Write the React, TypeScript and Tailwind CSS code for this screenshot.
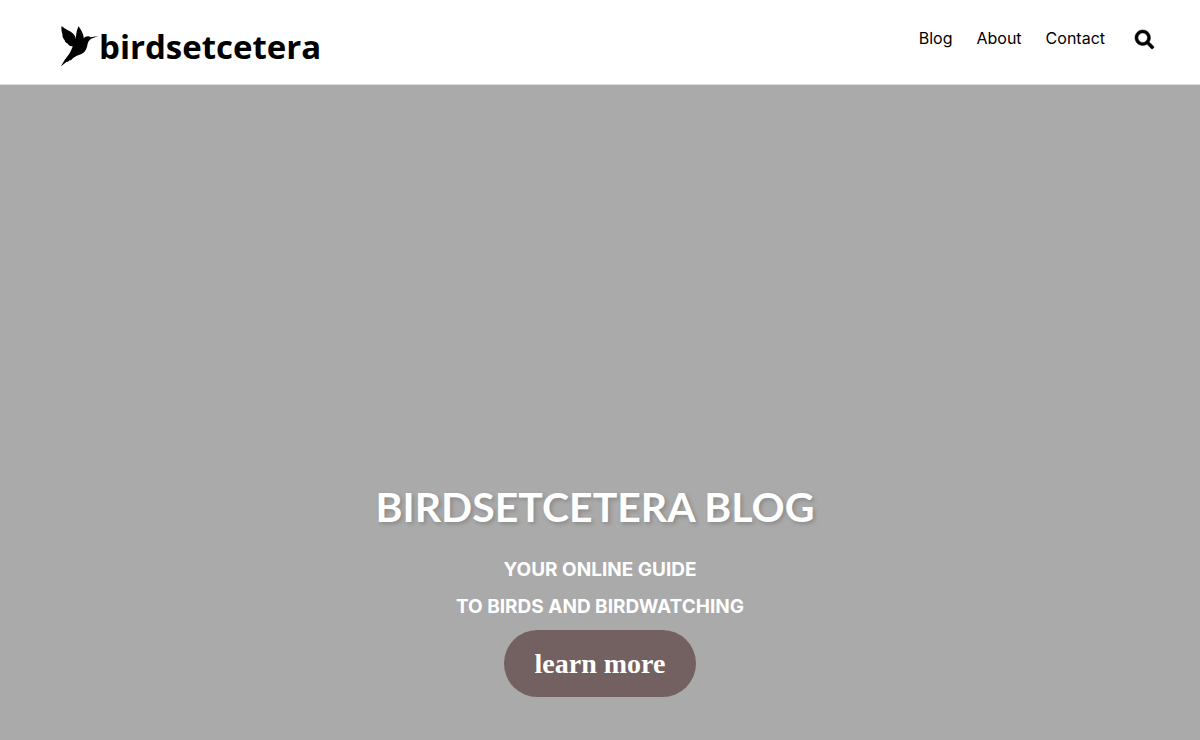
const links = ["Blog", "About", "Contact"];

function Hummingbird() {
  return (
    <svg viewBox="0 0 39 42" className="h-[42px] w-[39px]" fill="currentColor" aria-hidden="true">
      <path d="M1.6 1C5.4 4.4 9.8 5.6 13 8.6C15 10.6 15.8 12.4 16 14.6C15.8 9.6 16.6 5 18.6 1.2C21 5 23.6 8.6 23.8 13.2C25.4 11.4 28.6 10.6 30.6 12.2L38.2 11L31.2 13.7C28.9 15.2 28 17 27.5 19.5C26.7 24 24.9 27.6 20.9 29.3C18 30.5 15.6 31.2 13.5 32.8L10.6 35.4L10 35L7.6 37L7 36.6L.8 41.4L4.8 34.8L8.6 29.8C10.9 26.7 11.6 24 12.8 21.6C10.9 21.4 9.3 20.8 8 19.6L8.6 19.3C6.8 18.5 5.4 17.4 4.5 15.8L5.1 15.6C3.5 14 2.6 12.3 2.2 10.5L2.8 10.4C1.5 7 1.1 4.2 1.6 1Z" />
    </svg>
  );
}

function SearchIcon() {
  return (
    <svg viewBox="0 0 512 512" className="h-[19px] w-[19px] overflow-visible" fill="currentColor" stroke="currentColor" strokeWidth="14" aria-hidden="true">
      <path d="M505 442.7 405.3 343c-4.5-4.5-10.6-7-17-7H372c27.6-35.3 44-79.7 44-128C416 93.1 322.9 0 208 0S0 93.1 0 208s93.1 208 208 208c48.3 0 92.7-16.4 128-44v16.3c0 6.4 2.5 12.5 7 17l99.7 99.7c9.4 9.4 24.6 9.4 33.9 0l28.3-28.3c9.4-9.4 9.4-24.6.1-34zM208 336c-70.7 0-128-57.2-128-128 0-70.7 57.2-128 128-128 70.7 0 128 57.2 128 128 0 70.7-57.2 128-128 128z" />
    </svg>
  );
}

export default function App() {
  return (
    <div className="flex min-h-screen flex-col bg-[#aaaaaa] font-['Inter',sans-serif]">
      <header className="flex h-[85px] items-start justify-between border-b border-[#dddddd] bg-white pr-[46px] pl-[60px] text-black">
        <a href="#" className="flex items-start pt-[25px]">
          <Hummingbird />
          <span className="font-['Open_Sans',sans-serif] text-[33px] leading-[44px] font-bold">birdsetcetera</span>
        </a>
        <div className="flex items-start gap-[30px] pt-[26px]">
          <nav className="flex gap-6">
            {links.map((link) => (
              <a key={link} href="#" className="text-base leading-6">
                {link}
              </a>
            ))}
          </nav>
          <button type="button" aria-label="Search" className="flex h-[26px] items-center">
            <SearchIcon />
          </button>
        </div>
      </header>
      <main className="flex grow flex-col items-center justify-end pb-[43px] text-center text-white">
        <h1 className="mb-[19px] pr-[10px] font-['Lato',sans-serif] text-[41px] leading-[50px] font-bold [text-shadow:2px_2px_4px_rgba(0,0,0,0.2)]">
          BIRDSETCETERA BLOG
        </h1>
        <p className="text-[19px] leading-[37px] font-bold">
          YOUR ONLINE GUIDE
          <br />
          TO BIRDS AND BIRDWATCHING
        </p>
        <a
          href="#"
          className="mt-[5px] rounded-full bg-[#736060] px-[31px] py-[15px] font-['Liberation_Serif',serif] text-[28px] leading-[37px] font-bold"
        >
          learn more
        </a>
      </main>
    </div>
  );
}
